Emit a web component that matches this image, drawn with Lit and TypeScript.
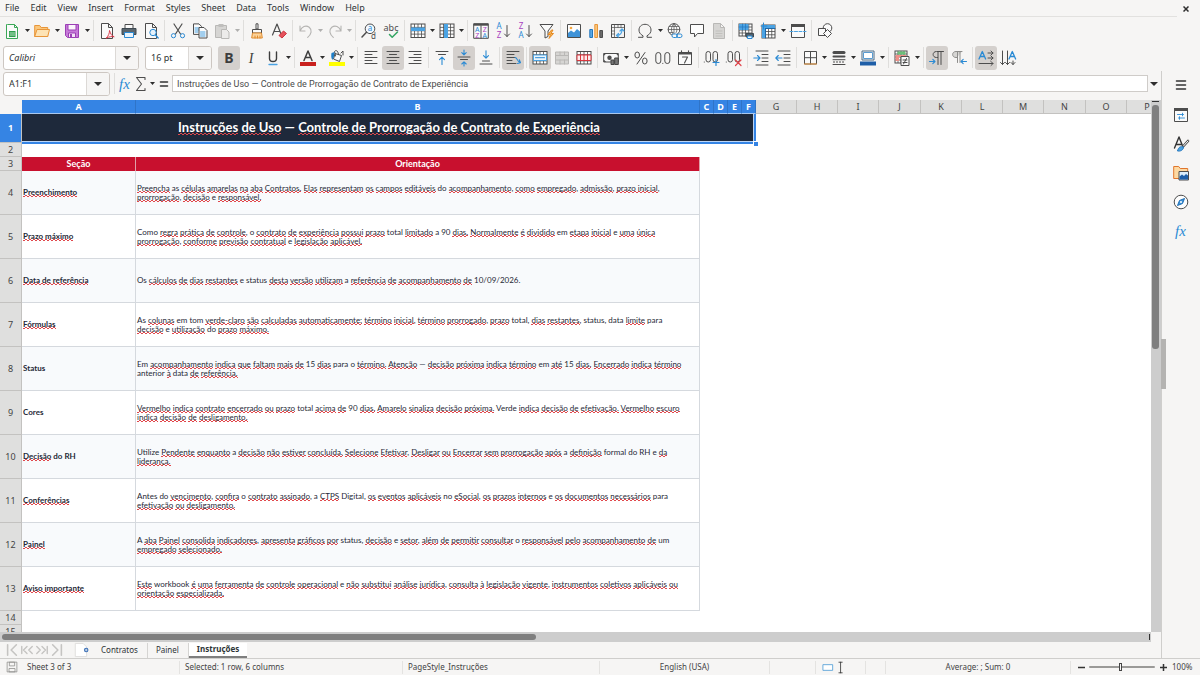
import { LitElement, html, svg, css, nothing, SVGTemplateResult } from "lit";
import { customElement, property } from "lit/decorators.js";

type Art = SVGTemplateResult;

const INK = "#4d4d4d";
const BLUE = "#2a8ad4";
const SKY = "#4ba3e3";
const line = (d: string, color = INK, w = 1): Art =>
  svg`<path d=${d} fill="none" stroke=${color} stroke-width=${w} stroke-linecap="round" stroke-linejoin="round"/>`;
const shape = (d: string, fill: string, stroke = "none"): Art =>
  svg`<path d=${d} fill=${fill} stroke=${stroke} stroke-linejoin="round"/>`;
const page = (stroke = INK, fill = "#fafafa"): Art => shape("M2.5 .5h7l4 4v11h-11zM9.5 .5v4h4", fill, stroke);
const glyph = (x: number, y: number, size: number, color: string, text: string, extra = ""): Art =>
  svg`<text x=${x} y=${y} font-size=${size} fill=${color} text-anchor="middle" style=${extra}>${text}</text>`;
const table = (x: number, y: number, w: number, h: number, c = INK): Art => {
  const a = w / 4;
  const b = h / 4;
  return svg`<rect x=${x} y=${y} width=${w} height=${h} fill="#fdfdfd" stroke=${c}/>
    <path fill="none" stroke=${c} stroke-width=".8" d="M${x + a} ${y}v${h}M${x + 2 * a} ${y}v${h}M${x + 3 * a} ${y}v${h}M${x} ${y + b}h${w}M${x} ${y + 2 * b}h${w}M${x} ${y + 3 * b}h${w}"/>`;
};

const ICONS: Record<string, Art> = {
  new: svg`${shape("M3.500 1.500h7l3 3v11h-11v-14z", "#fafafa", "#3aa757")}${shape("M10.500 1.500v3h3", "none", "#3aa757")}${shape("M5 8h6.500v6h-6.500z", "#2f9e4d")}${line("M6 10h4.500M6 12h4.500", "#d9f2df", 0.8)}`,
  open: svg`${shape("M.7 13.500v-11h5l1.500 2h6.500v9z", "#fbc77b", "#e8963a")}${shape("M.7 13.500l2.300-7h12.500l-1.800 7z", "#fde3b5", "#e8963a")}`,
  save: svg`${shape("M1.500 1.500h13v13h-11l-2-2z", "#c679d8", "#9b3fb5")}${shape("M4 1.500h8v5.500h-8z", "#fbf5fc", "#9b3fb5")}${shape("M4.500 10h7v4.500h-7z", "#f3e3f6", "#9b3fb5")}${shape("M6 11h2v3h-2z", "#9b3fb5")}`,
  pdf: svg`${page()}${line("M7.500 15c2-2.500 3-4.500 3-7.500 1 3.500 2.500 5.500 4.700 6.300-2.500-.5-5-.2-7.700 1.200z", "#d93a4a", 1)}`,
  print: svg`${shape("M4 1.500h8v4h-8z", "#fafafa", INK)}${shape("M1 5.500h14v6h-14z", "#5b666e", "#3f4a52")}${shape("M3.500 9.500h9v5h-9z", "#eaf4fc", BLUE)}`,
  preview: svg`${page()}<circle cx="10" cy="9.500" r="3.200" fill="#e6f2fb" stroke=${BLUE}/>${line("M12.500 12l2.700 3", BLUE, 1.3)}`,
  cut: svg`${line("M4 1l6.500 10M12 1L5.500 11", INK, 1.2)}<circle cx="3.500" cy="12.700" r="2.100" fill="none" stroke=${BLUE}/><circle cx="12.500" cy="12.700" r="2.100" fill="none" stroke=${BLUE}/>`,
  copy: svg`${shape("M1.500 .9h5.500l2.500 2.500v8h-8z", "#fafafa", INK)}${line("M3 5h4M3 7h4M3 9h3", SKY)}${shape("M7 4.500h5l3 3v7.500h-8z", "#fafafa", INK)}${line("M8.500 9h4.500M8.500 11h4.500M8.500 13h4.500", SKY)}`,
  paste: svg`${shape("M1.500 2.500h11v12h-11z", "#d6d5d3", "#b9b8b6")}${shape("M4.500 1h5v3h-5z", "#bfbebc")}${shape("M7.500 6.500h5l2.500 2.500v6.500h-7.500z", "#ecebea", "#b9b8b6")}`,
  brush: svg`${shape("M7 .8h2v5.200h-2z", "#fafafa", INK)}${shape("M3.500 6.500h9v3.500h-9z", "#fafafa", INK)}${shape("M3.500 10h9l.8 5h-10.600z", "#fcd39a", "#e08b2d")}${line("M6 15v-2M8.500 15v-2M11 15v-2", "#e08b2d")}`,
  clear: svg`${line("M1.500 12l4.500-11 4 10M3 8.500h5.500", INK, 1.2)}${shape("M8 12.500l4.500-4.500 3 2.500-4.500 4.500z", "#e5535c", "#cf3340")}`,
  undo: line("M2 3v5h5M2.200 7.800c1.500-4 5.500-6 9-3.500 3.200 2.600 2.300 6.700-1.500 10", "#b5b4b2", 1.1),
  redo: line("M14 3v5h-5M13.800 7.800c-1.500-4-5.500-6-9-3.500-3.200 2.600-2.300 6.700 1.500 10", "#b5b4b2", 1.1),
  find: svg`<circle cx="9" cy="5.800" r="4.800" fill="#f4faff" stroke=${INK}/>${line("M5.500 9.300l-4.500 4.700", INK, 1.5)}${glyph(9, 8.300, 8, BLUE, "a")}${glyph(12.500, 15.500, 8, INK, "d")}`,
  spell: svg`${glyph(8, 8, 9, INK, "abc")}${line("M6.500 11.500l2.700 2.800 5.300-5.300", "#33a563", 1.5)}`,
  rowins: svg`${table(1, 1, 14, 13.500)}${shape("M1 4.500h14v3.500h-14z", SKY)}`,
  colins: svg`${table(1, 1, 14, 13.500)}${shape("M5 1h4v14h-4z", SKY)}`,
  sort: svg`${shape("M.7 .7h14.600v14.600h-14.600z", "#fafafa", INK)}${shape("M.7 .7h14.600v2h-14.600z", INK)}${line("M8 2.700v12.600")}${glyph(4.300, 8.500, 7, BLUE, "A")}${glyph(4.300, 14.800, 7, "#a93fc0", "Z")}${glyph(11.800, 8.500, 7, "#a93fc0", "Z")}${glyph(11.800, 14.800, 7, BLUE, "A")}`,
  az: svg`${glyph(4, 6, 8, BLUE, "A")}${glyph(4, 15, 8, "#a93fc0", "Z")}${line("M12 2.500v11M9.500 11l2.500 2.500 2.500-2.500")}`,
  za: svg`${glyph(4, 6, 8, "#a93fc0", "Z")}${glyph(4, 15, 8, BLUE, "A")}${line("M12 2.500v11M9.500 11l2.500 2.500 2.500-2.500")}`,
  filter: svg`${shape("M1 1.500h13l-5 6.500v5.500l-3 1.500v-7z", "#fafafa", INK)}${shape("M12.500 7l-3.500 4.500h2.500l-1.500 4 4.500-5h-2.500l2-3.500z", "#f7b65c", "#e58a22")}`,
  image: svg`${shape("M1.500 1.500h13v13h-13z", "#fdfdfd", INK)}<circle cx="5" cy="5" r="1.300" fill="#f5a742"/>${shape("M2 14v-4l3-2.500 3 2 3-3.500 3 2.500v5.500z", "#3f93d8")}`,
  chart: svg`${shape("M1.800 6.500h2.700v8h-2.700z", "#5aa9e6", "#2376bd")}${shape("M6.800 1.500h2.700v13h-2.700z", "#fbc77b", "#e8963a")}${shape("M11.800 7.500h2.700v7h-2.700z", "#6b6b6b", INK)}`,
  pivot: svg`${shape("M1.500 1.500h13v13h-13z", "#f2f2f2", INK)}${line("M1.500 4.500h13M4.500 1.500v13M8 1.500v3M11 1.500v3M1.500 8h3M1.500 11h3", INK, 0.7)}${line("M6.500 12.500c3.500 0 5.500-2.500 5.500-6M10 8l2-2 2 2M8.500 10.500l-2 2 2 1.500", SKY, 1.2)}`,
  omega: line("M1.500 14.300h4.500v-1.500c-2.800-1.600-4-3.400-4-5.800 0-3.300 2.500-5.700 6-5.700s6 2.400 6 5.700c0 2.400-1.200 4.200-4 5.800v1.500h4.500", INK, 1),
  link: svg`<circle cx="7" cy="6.500" r="5.800" fill="#fafafa" stroke=${INK}/>${line("M1.200 6.500h11.600M7 .7v11.600M2.300 3.500h9.400M2.300 9.500h4M7 .7c-3.500 3.500-3.500 8 0 11.600M7 .7c3.500 3.500 3.500 7 2 9", INK, 0.7)}<rect x="5" y="11" width="5.500" height="3.500" rx="1.700" fill="#fafafa" stroke=${BLUE}/><rect x="9.500" y="11" width="5.500" height="3.500" rx="1.700" fill="none" stroke=${BLUE}/>`,
  comment: shape("M1.500 1.500h13v9h-6l-3 3.500v-3.500h-4z", "#fdfdfd", INK),
  footer: svg`${page("#b9b8b6", "#d6d5d3")}${line("M5 8h6M5 10.500h6M5 13h6", "#bcbbb9", 0.8)}`,
  printarea: svg`${table(1, 1, 13, 12)}${shape("M1 1h9.500v6h-9.500z", SKY)}${line("M4.500 1v6M7.500 1v6M1 4h9.500", "#2376bd", 0.7)}${shape("M8 10.500h7.500v3.500h-7.500z", "#53606a", "#3f4a52")}${shape("M9.500 13h4.500v2.500h-4.500z", "#eaf4fc", BLUE)}`,
  freeze: svg`${table(2, 2, 13, 13)}${shape("M2 2h13v3.500h-13zM2 2h3.500v13h-3.500z", SKY)}${line("M5.500 5.500v9.500M5.500 5.500h9.500", "#1f67a6", 1)}${line("M3.500 0v6M1 3h6", BLUE, 1)}`,
  split: svg`${shape("M1.500 1.500h13v13h-13z", "#fafafa", INK)}${shape("M1 1h14v3h-14z", INK)}${line("M0 8.500h3M4.500 8.500h3M9 8.500h3M13.500 8.500h2.500", SKY)}`,
  shapes: svg`<circle cx="10.500" cy="5" r="4.300" fill="#fafafa" stroke=${INK}/>${shape("M1.500 5.500h7v7h-7z", "#fafafa", INK)}${shape("M10.500 6.500l4 4-4 4-4-4z", "#fafafa", INK)}`,
  bold: glyph(8, 13, 14, "#3d3d3d", "B", "font-weight:700"),
  italic: svg`<text x="8" y="13" font-size="14" fill="#3d3d3d" text-anchor="middle" font-family="Liberation Serif" font-style="italic">I</text>`,
  underline: svg`${line("M4.500 2v6.500c0 4 7 4 7 0v-6.500", "#3d3d3d", 1.4)}${line("M4 14.500h8", SKY, 1.3)}`,
  fontcolor: svg`${line("M4 10.500l4-9.500 4 9.500M5.500 7.500h5", "#3d3d3d", 1.5)}${shape("M0 12h16v4h-16z", "#c9211e")}`,
  fill: svg`${shape("M6 3.500l6.500 2-2 6-6-2.500z", "#fafafa", INK)}${line("M6.500 6l-1-4.500c1-1.500 3-1 3.500 1l.5 2", INK)}${shape("M2.500 3l3-1-.5 4.500-1.500 3.500c-1.500-2-1.500-4.500-1-7z", "#1f7fc8")}${line("M12 3l2-2v4", INK)}${shape("M0 12h16v4h-16z", "#ffff00")}`,
  left: line("M2 1.500h12M2 4.500h7M2 7.500h12M2 10.500h7M2 13.500h12"),
  center: line("M2 1.500h12M4.500 4.500h7M2 7.500h12M4.500 10.500h7M2 13.500h12"),
  right: line("M2 1.500h12M7 4.500h7M2 7.500h12M7 10.500h7M2 13.500h12"),
  top: svg`${line("M2 1.500h12M4.500 4.500h7")}${line("M8 14.500v-7M5.500 9.700l2.500-2.500 2.500 2.500", BLUE, 1.1)}`,
  middle: svg`${line("M2 7h12M4.500 9.500h7")}${line("M8 0v4.500M5.800 2.700l2.200 2.200 2.200-2.200M8 16v-4M5.800 14l2.200-2.200 2.200 2.200", BLUE, 1.1)}`,
  bottom: svg`${line("M4.500 11h7M2 14h12")}${line("M8 .8v7M5.500 5.600l2.500 2.500 2.500-2.500", BLUE, 1.1)}`,
  wrap: svg`${line("M2 1.500h12M2 4.500h7M2 7.500h8M2 10.500h5M2 13.500h9")}${line("M10 7.500c2.500 0 2 4 5 5M12.500 13.500l3-.8-1.200-3", BLUE, 1.1)}`,
  merge: svg`${table(1, 1.500, 14, 12.500)}${shape("M1.500 5h13v5.500h-13z", "#eaf5fd", SKY)}${line("M3.500 7.700h9", BLUE)}`,
  mergegrey: svg`${shape("M1.500 2h13v12h-13z", "#d6d5d3", "#b9b8b6")}${line("M1.500 5.500h13M1.500 10h13M6 2v3.500M10.500 2v3.500M6 10v4M10.500 10v4", "#b9b8b6")}`,
  mergered: svg`${table(1, 1.500, 14, 12.500)}${shape("M1 5h14v5.500h-14z", "#fdecec", "#d9363e")}${line("M4.500 5v5.500M8 5v5.500M11.500 5v5.500", "#d9363e")}`,
  currency: svg`${shape("M.7 3.500h14.600v8.500h-14.600z", "#fafafa", INK)}<circle cx="6.500" cy="7.800" r="2.200" fill=${INK}/>${shape("M.7 3.500h2.500l-2.500 2.500zM15.300 3.500h-2.500l2.500 2.500zM.7 12h2.500l-2.500-2.500z", INK)}${shape("M8 10h3v4.500h-3zM11.700 8h3.600v6.500h-3.600z", "#777", "#444")}`,
  percent: svg`<ellipse cx="4.200" cy="5" rx="2.300" ry="3" fill="none" stroke=${INK}/><ellipse cx="11.800" cy="11" rx="2.300" ry="3" fill="none" stroke=${INK}/>${line("M12 2.500l-8 11.500")}`,
  number: svg`<rect x=".8" y="2.500" width="5" height="11" rx="2.500" fill="none" stroke=${INK}/><rect x="9.800" y="2.500" width="5" height="11" rx="2.500" fill="none" stroke=${INK}/>${line("M7.800 13.300v.2")}`,
  date: svg`${shape("M1.500 2.500h13v12h-13z", "#fafafa", INK)}${shape("M1.500 2.500h13v2h-13z", INK)}${line("M4.500 .8v2M11.500 .8v2M5.500 7h5l-3 6", INK, 1.1)}`,
  decadd: svg`<rect x="2" y="1.500" width="4.500" height="10.500" rx="2.200" fill="none" stroke=${INK}/><rect x="9" y="1.500" width="4.500" height="10.500" rx="2.200" fill="none" stroke=${INK}/>${line("M.3 12v.1")}${line("M12 9.500v6M9 12.500h6", BLUE, 1.2)}`,
  decdel: svg`<rect x="2" y="1.500" width="4.500" height="10.500" rx="2.200" fill="none" stroke=${INK}/><rect x="9" y="1.500" width="4.500" height="10.500" rx="2.200" fill="none" stroke=${INK}/>${line("M.3 12v.1")}${line("M9.500 10l5.500 5.500M15 10l-5.500 5.500", "#e0444b", 1.2)}`,
  indent: svg`${line("M3 1h12M9 4.500h6M9 8h6M9 11.500h6M3 15h12")}${line("M.8 8h6M4.500 5.500l2.500 2.500-2.500 2.500", BLUE, 1.1)}`,
  outdent: svg`${line("M3 1h12M9 4.500h6M9 8h6M9 11.500h6M3 15h12")}${line("M1 8h6M3.300 5.500l-2.500 2.500 2.500 2.500", BLUE, 1.1)}`,
  borders: svg`${shape("M2.500 1.500h12v12.500h-12z", "#fafafa", INK)}${line("M8.500 1.500v12.500M2.500 7.700h12")}${line("M2.500 14h12", "#e8963a")}`,
  linestyle: svg`${line("M3 2.500h10", INK, 3)}${line("M2.500 6.500h11", INK, 2)}${line("M2 9.700h12M2 14.500h12", INK, 1)}<path d="M2 12h12" stroke=${INK} stroke-dasharray="2 1"/>`,
  bordercolor: svg`${shape("M2 1h12v9h-12z", "#fafafa", "#4b6b86")}${shape("M3.500 2.500h9v6h-9z", "#fff", "#5a9bd0")}${shape("M0 11.500h16v4h-16z", "#1f5fa8")}`,
  conditional: svg`${table(1, 1, 12, 12)}${shape("M3.500 1.500h8v3h-8z", "#6cc07a")}${shape("M1.500 5h3.500v6h-3.500zM5 5h7v2h-7z", "#ef8f88")}${shape("M7 6.500h8v9h-8z", "#fafafa", INK)}${line("M9 10h4M9 12.500h4M12.500 8.500l-3 5.500")}`,
  ltr: svg`${line("M14.500 1.500h-7c-4.500 0-4.500 6 0 6h1M9 1.500v13M12 1.500v13")}${line("M.5 11.500h5.500M3.800 9.300l2.200 2.200-2.200 2.200", BLUE, 1.1)}`,
  rtl: svg`${shape("M11 1.500h-6c-4.500 0-4.500 6 0 6h1z", "#d6d5d3")}${line("M11 1.500h-6c-4.500 0-4.500 6 0 6h1M6.500 1.500v11M9 1.500v11", "#8e8d8b")}${line("M10 11.500h5.500M12.200 9.300l-2.200 2.200 2.200 2.200", BLUE, 1.1)}`,
  texth: svg`${line("M1 9l3.300-7.500 3.300 7.500M2.200 6.500h4.200", BLUE, 1.3)}${line("M10 3h5M13 1l2 2-2 2M10 8h5M13 6l2 2-2 2M1 13.500h14M13 11.500l2 2-2 2")}`,
  textv: svg`${line("M9 9l3.300-7.500 3.300 7.500M10.200 6.500h4.200", BLUE, 1.3)}${line("M2.500 1v13.500M.5 12.500l2 2 2-2M7.500 1v13.500M5.500 12.500l2 2 2-2M13 11v3.500M11 12.500l2 2 2-2")}`,
  fx: svg`<text x="7.500" y="13" font-size="15" fill=${BLUE} text-anchor="middle" font-family="Liberation Serif" font-style="italic">fx</text>`,
  sum: line("M12 3.500v-2h-8.500l5 6.500-5 6.500h8.500v-2", INK, 1.1),
  equals: line("M4.500 6h7M4.500 10h7", "#333", 1.6),
  menu: line("M3.500 4h9M3.500 8h9M3.500 12h9", "#333", 1.6),
  properties: svg`${shape("M1.500 1.500h13v13h-13z", "#fafafa", INK)}${shape("M1 1h14v3h-14z", INK)}${line("M4.500 7.500h6M9.500 6.200v2.600M5.500 11h6M6.500 9.700v2.600", BLUE, 0.9)}`,
  styles: svg`${line("M1.500 12l4.500-11 4 10M3 8.500h5.500", "#333", 1.4)}${line("M15 5l-4.500 5", INK, 2.6)}${line("M15 5l-4.500 5", "#fafafa", 1)}${shape("M4.500 15c1-4 3-5 6-4 0 3-3 4.500-6 4z", "#4ba3e3", "#2376bd")}`,
  gallery: svg`${shape("M.7 13.500v-12h5l1.500 2h7.500v10z", "#fdd9a2", "#e0762d")}${shape("M6 6.500h9.500v8.500h-9.500z", "#dceefb", INK)}${shape("M6.500 14.500v-3l2.500-2 2 1.500 2-2 2 1.500v4z", "#1f5fa8")}`,
  navigator: svg`<circle cx="8" cy="8" r="6.800" fill="#fdfdfd" stroke=${INK}/>${shape("M11.500 4.500l-2 5-5 2 2-5z", "#3f93d8", "#1f6fb5")}<circle cx="8" cy="8" r="1" fill="#fff"/>`,
  disk: svg`${shape("M1.500 1.500h13v13h-13z", "none", "#8c8b89")}${shape("M4.500 1.500h7v5h-7zM4 10h8v4.500h-8z", "none", "#8c8b89")}`,
  addsheet: svg`${shape("M-2 .5h9l4 4v11h-13z", "#fff", "#dddcda")}<circle cx="10.500" cy="8" r="2.600" fill="#3b6fb5"/>${line("M10.500 7v2M9.500 8h2", "#fff", 0.8)}`,
  selmode: svg`${shape("M.5 4.500h12v7h-12z", "#fff", "#4b9ad4")}`,
  ibeam: line("M3 1.500h4M5 1.500v13M3 14.500h4", "#333", 1),
  first: line("M3 2v12M13 2l-6 6 6 6", "#c5c4c2", 1.8),
  prev: line("M2 4v8M8 4l-4 4 4 4M14 4l-4 4 4 4", "#c5c4c2", 1.6),
  next: line("M14 4v8M8 4l4 4-4 4M2 4l4 4-4 4", "#c5c4c2", 1.6),
  last: line("M13 2v12M3 2l6 6-6 6", "#c5c4c2", 1.8),
};

@customElement("tool-icon")
export class ToolIcon extends LitElement {
  @property() name = "";
  static styles = css`
    :host { display: block; width: 16px; height: 16px; }
    .art { display: block; width: 100%; height: 100%; overflow: visible; font-family: "Noto Sans", sans-serif; }
  `;
  render() {
    return html`<svg class="art" viewBox="0 0 16 16" aria-hidden="true">${ICONS[this.name] ?? nothing}</svg>`;
  }
}

/* Flags after a tool name: "*" pressed, "+" drop-down, "-" compact drop-down. "|" separates groups. */
const STANDARD =
  "new+ open+ save+ | pdf print preview | cut copy paste+ | brush clear | undo- redo- | find spell | rowins- colins- | sort az za filter | image chart pivot | omega+ link comment footer | printarea freeze+ split | shapes";
const FORMATTING =
  "bold* italic underline+ | fontcolor- fill- | left center* right | top middle* bottom | wrap* | merge* mergegrey mergered | currency+ percent number date | decadd decdel | indent outdent | borders- linestyle- bordercolor- | conditional+ | ltr* rtl | texth* textv";

const MENUS = ["File", "Edit", "View", "Insert", "Format", "Styles", "Sheet", "Data", "Tools", "Window", "Help"];

const TITLE = "[Instruções] [de Uso] — [Controle de Prorrogação de Contrato de Experiência]";

/* Square brackets delimit words flagged by the spelling checker. */
const ROWS: [string, string[]][] = [
  ["[Preenchimento]", [
    "[Preencha] as [células] [amarelas] [na] [aba] [Contratos.] [Elas] [representam] [os] [campos] [editáveis] do [acompanhamento], [como] [empregado], [admissão], [prazo inicial],",
    "[prorrogação], [decisão] e [responsável.]"]],
  ["[Prazo máximo]", [
    "Como [regra] [prática] [de] [controle], o [contrato] [de] [experiência] [possui] [prazo] total [limitado] a 90 [dias.] [Normalmente] [é] [dividido] em [etapa] [inicial] e [uma] [única]",
    "[prorrogação], [conforme] [previsão] [contratual] e [legislação] [aplicável.]"]],
  ["[Data de referência]", [
    "Os [cálculos] [de] [dias] [restantes] e status [desta] [versão] [utilizam] a [referência] [de] [acompanhamento] [de] 10/09/2026."]],
  ["[Fórmulas]", [
    "As [colunas] em tom [verde-claro] [são] [calculadas] [automaticamente:] [término] [inicial], [término] [prorrogado], [prazo] total, [dias] [restantes], status, data [limite] para",
    "[decisão] e [utilização] do [prazo] [máximo.]"]],
  ["Status", [
    "Em [acompanhamento] [indica] [que] [faltam] [mais] [de] 15 [dias] para o [término.] [Atenção] — [decisão] [próxima] [indica] [término] em [até] 15 [dias.] [Encerrado] [indica] [término]",
    "anterior [à] data [de] [referência.]"]],
  ["Cores", [
    "[Vermelho] [indica] [contrato] [encerrado] [ou] [prazo] total [acima] [de] 90 [dias.] [Amarelo] [sinaliza] [decisão] [próxima.] Verde [indica] [decisão] [de] [efetivação.] [Vermelho] [escuro]",
    "[indica] [decisão] [de] [desligamento.]"]],
  ["[Decisão] do RH", [
    "Utilize [Pendente] [enquanto] a [decisão] [não] [estiver] [concluída.] [Selecione] [Efetivar], [Desligar] [ou] [Encerrar] [sem] [prorrogação] [após] a [definição] formal do RH e [da]",
    "[liderança.]"]],
  ["[Conferências]", [
    "Antes do [vencimento], [confira] o [contrato] [assinado], a [CTPS] Digital, [os] [eventos] [aplicáveis] no [eSocial], [os] [prazos] [internos] e [os] [documentos] [necessários] para",
    "[efetivação] [ou] [desligamento.]"]],
  ["[Painel]", [
    "A [aba] [Painel] [consolida] [indicadores], [apresenta] [gráficos] [por] status, [decisão] e [setor], [além] [de] [permitir] [consultar] o [responsável] [pelo] [acompanhamento] [de] um",
    "[empregado] [selecionado.]"]],
  ["[Aviso importante]", [
    "[Este] workbook [é] [uma] [ferramenta] [de] [controle] [operacional] e [não] [substitui] [análise] [jurídica], [consulta] [à] [legislação] [vigente], [instrumentos] [coletivos] [aplicáveis] [ou]",
    "[orientação] [especializada.]"]],
];

@customElement("app-root")
export class AppRoot extends LitElement {
  static styles = css`
    :host {
      display: flex; flex-direction: column; height: 100vh; overflow: hidden;
      background: #f6f5f4; color: #2e3436;
      font: 9px/12px "Noto Sans", sans-serif;
    }
    * { box-sizing: border-box; }
    button, input { font: inherit; color: inherit; margin: 0; padding: 0; border: 0; background: none; outline: none; }
    button { display: flex; align-items: center; justify-content: center; flex: none; }
    .menubar { display: flex; align-items: center; height: 17px; padding-right: 6px; }
    .menus { display: flex; flex: 1; gap: 11px; padding-left: 5px; height: 17px; align-items: center; border-bottom: 1px solid #e2e1df; }
    .close { width: 17px; height: 17px; }
    .close-art { width: 6px; height: 6px; }
    .toolbar { display: flex; align-items: center; height: 27px; padding-left: 1px; }
    .formatting { padding-left: 3px; }
    .tool { width: 22px; height: 24px; border-radius: 3px; }
    .pressed { background: #d4d0cd; }
    .drop { width: 8px; height: 24px; }
    .compact { width: 7px; }
    .drop-art { width: 5px; height: 3px; display: block; flex: none; }
    .big { width: 8px; height: 4px; }
    .dim { opacity: .35; }
    .sep { width: 1px; height: 21px; margin: 0 2px; background: #dfdedc; flex: none; }
    .combo { display: flex; height: 24px; border: 1px solid #cdc7c2; border-radius: 3px; background: #fff; overflow: hidden; flex: none; }
    .combo-text { flex: 1; min-width: 0; padding-left: 5px; }
    .combo-drop { width: 23px; background: #f6f5f4; border-left: 1px solid #dcd9d6; }
    .font { width: 136px; margin-right: 6px; }
    .font .combo-text { font-style: italic; }
    .size { width: 67px; margin-right: 6px; }
    .name { width: 107px; margin-right: 2px; }
    .body { display: flex; flex: 1; min-height: 0; }
    .work { display: flex; flex-direction: column; flex: 1; min-width: 0; }
    .formula { display: flex; align-items: center; height: 29px; padding: 0 1px 4px 3px; }
    .formula .tool { width: 16px; }
    .formula-text { flex: 1; min-width: 0; height: 17px; padding-left: 4px; background: #fff; border: 1px solid #cfccc9; color: #4a4a4a; font-family: "Roboto", sans-serif; }
    .formula-drop { width: 12px; height: 24px; }
    .sidebar { position: relative; display: flex; flex-direction: column; align-items: center; gap: 5px; width: 39px; border-left: 1px solid #cfcecc; }
    .sidebar .tool { height: 24px; }
    .sidebar .tool:first-of-type { height: 27px; }
    .grip { position: absolute; left: -1px; top: 268px; width: 5px; height: 50px; background: #b4b3b1; }
    .view { display: flex; flex: 1; min-height: 0; }
    .sheet { flex: 1; min-width: 0; overflow: hidden; background: #fff; }
    .grid { table-layout: fixed; border-collapse: separate; border-spacing: 0; width: 1168px; }
    .grid th, .grid td { padding: 0; overflow: hidden; }
    .c-row { width: 22px; }
    .c-a { width: 114px; }
    .c-b { width: 564px; }
    .c-s { width: 14px; }
    .c-n { width: 41px; }
    .c-w { width: 42px; }
    .cols { height: 14px; }
    .corner { background: #f6f5f4; }
    .col { height: 14px; line-height: 13px; font-weight: 400; background: #dfdfde; border-right: 1px solid #c3c2c0; border-bottom: 1px solid #c3c2c0; color: #444; }
    .col-sel { background: #3584e4; color: #fff; font-weight: 700; border-right-color: #2f74c8; border-bottom-color: #a9c8ee; }
    .num { font-weight: 400; background: #dfdfde; border-right: 1px solid #c3c2c0; border-bottom: 1px solid #c3c2c0; color: #444; }
    .num-sel { background: #3584e4; color: #fff; font-weight: 700; }
    .r-title { height: 29px; }
    .r-thin { height: 14px; }
    .r-text { height: 44px; }
    .grid .title { position: relative; overflow: visible; padding-bottom: 3px; background: #1e293b; color: #fff; font: 700 13px/16px "Lato", sans-serif; text-align: center; }
    .title::after { content: ""; position: absolute; inset: 0 0 -1px 0; border: solid #3584e4; border-width: 0 2px 2px 0; box-shadow: inset -1px -1px #bcd5f5; }
    .handle { position: absolute; z-index: 1; right: -2px; bottom: -3px; width: 5px; height: 5px; background: #3584e4; border: solid #fff; border-width: 1px 0 0 1px; }
    .head { background: #c8102e; color: #fff; font: 700 9px/12px "Lato", sans-serif; border-right: 1px solid #e0a0a8; text-align: center; }
    .label, .text { border-right: 1px solid #d5d9de; border-bottom: 1px solid #d5d9de; font: 8px/9px "Lato", sans-serif; color: #1f2937; text-align: left; vertical-align: middle; white-space: nowrap; }
    .grid .label { font-weight: 700; padding-left: 1px; }
    .grid .text { padding-left: 1px; }
    .shade { background: #f8fafc; }
    .miss {
      background:
        linear-gradient(90deg, #e0484c 50%, #e0484c00 0) 0 100% / 4px 1px repeat-x,
        linear-gradient(90deg, #e0484c 50%, #e0484c00 0) 2px calc(100% - 1px) / 4px 1px repeat-x;
    }
    .vscroll { display: flex; flex-direction: column; gap: 3px; width: 10px; padding: 1px 2px 0 1px; background: #cdcdcd; }
    .vscroll::before { content: ""; flex: none; height: 1px; background: #333; }
    .vthumb { height: 46%; background: #7f7f7f; border-radius: 3px; }
    .hscroll { display: flex; justify-content: space-between; height: 10px; margin-right: 10px; padding: 2px 1px 2px 2px; background: #cdcdcd; }
    .hscroll::after { content: ""; width: 1px; background: #333; }
    .hthumb { width: 46.5%; height: 6px; background: #7f7f7f; border-radius: 3px; }
    .tabs { display: flex; align-items: center; height: 16px; padding-left: 4px; font-size: 8px; }
    .nav { width: 15px; height: 15px; }
    .add { width: 19px; margin-left: 10px; }
    .nav tool-icon { width: 14px; height: 14px; }
    .tab { height: 15px; padding: 0 9px 0 8px; border-right: 1px solid #d5d4d2; }
    .tab-on { background: #fff; font-weight: 700; padding: 0 8px; border-right: 0; border-bottom: 2px solid #7f7f7f; }
    .status { display: grid; grid-template-columns: 22px 158fr 223fr 197fr 170fr 46fr 30fr 20fr 20fr 185fr 96px 33px; align-items: center; height: 17px; border-top: 1px solid #cfcecc; color: #444; font-size: 8px; }
    .cell { min-width: 0; height: 13px; padding-left: 5px; border-right: 1px solid #e4e3e1; white-space: nowrap; overflow: hidden; }
    .cell:last-child { border-right: 0; }
    .mid { text-align: center; padding-left: 0; }
    .disk { width: 12px; height: 12px; margin-left: 6px; }
    .modes { display: flex; min-width: 0; padding-left: 6px; height: 13px; align-items: center; }
    .modes tool-icon { height: 13px; flex: none; width: 14px; }
    .zoom { display: flex; align-items: center; gap: 4px; height: 13px; padding-left: 6px; }
    .step { width: 8px; height: 12px; }
    .step-art { width: 7px; height: 7px; flex: none; }
    .slider { appearance: none; flex: 1; min-width: 0; height: 12px; }
    .slider::-webkit-slider-runnable-track { height: 2px; background: #9b9a98; border-radius: 1px; }
    .slider::-webkit-slider-thumb { appearance: none; width: 3px; height: 8px; margin-top: -3px; background: #f6f5f4; border: 1px solid #444; }
  `;

  private arrow(big = false, dim = false) {
    return html`<svg class="drop-art ${big ? "big" : ""} ${dim ? "dim" : ""}" viewBox="0 0 10 5" preserveAspectRatio="none" aria-hidden="true"><path d="M0 0h10l-5 5z" fill="#2e2e2e"/></svg>`;
  }

  private tools(spec: string) {
    return spec.split(" ").map((token) => {
      if (token === "|") return html`<span class="sep"></span>`;
      const name = token.replace(/[*+-]$/, "");
      const flag = token.slice(name.length);
      const dim = ["undo", "redo", "paste"].includes(name);
      return html`<button class="tool ${flag === "*" ? "pressed" : ""}" aria-label=${name}><tool-icon name=${name}></tool-icon></button>${
        flag === "+" || flag === "-"
          ? html`<button class="drop ${flag === "-" ? "compact" : ""}" aria-label="${name} options">${this.arrow(false, dim)}</button>`
          : nothing}`;
    });
  }

  private combo(kind: string, label: string, value: string) {
    return html`<div class="combo ${kind}"><input class="combo-text" aria-label=${label} .value=${value}><button class="combo-drop" aria-label="${label} list">${this.arrow(true)}</button></div>`;
  }

  private spelled(text: string) {
    return text.split(/(\[[^\]]*\])/).map((part) => (part.startsWith("[") ? html`<span class="miss">${part.slice(1, -1)}</span>` : part));
  }

  private sheet() {
    const wide = new Set(["J", "N"]);
    const rest = [..."GHIJKLMNOP"];
    return html`<table class="grid">
      <colgroup><col class="c-row"><col class="c-a"><col class="c-b">${[..."CDEF"].map(() => html`<col class="c-s">`)}${rest.map((c) => html`<col class=${wide.has(c) ? "c-w" : "c-n"}>`)}</colgroup>
      <thead><tr class="cols"><td class="corner"></td>${[..."ABCDEF"].map((c) => html`<th class="col col-sel" scope="col">${c}</th>`)}${rest.map((c) => html`<th class="col" scope="col">${c}</th>`)}</tr></thead>
      <tbody>
        <tr class="r-title"><th class="num num-sel" scope="row">1</th><td class="title" colspan="6">${this.spelled(TITLE)}<span class="handle"></span></td></tr>
        <tr class="r-thin"><th class="num" scope="row">2</th></tr>
        <tr class="r-thin"><th class="num" scope="row">3</th><td class="head">Seção</td><td class="head">Orientação</td></tr>
        ${ROWS.map(([label, lines], i) => html`<tr class="r-text"><th class="num" scope="row">${i + 4}</th>
          <td class="label ${i % 2 ? "" : "shade"}">${this.spelled(label)}</td>
          <td class="text ${i % 2 ? "" : "shade"}">${lines.map((l) => html`<div>${this.spelled(l)}</div>`)}</td></tr>`)}
        <tr class="r-thin"><th class="num" scope="row">14</th></tr>
        <tr class="r-thin"><th class="num" scope="row">15</th></tr>
      </tbody></table>`;
  }

  render() {
    return html`
      <header class="menubar">
        <nav class="menus">${MENUS.map((m) => html`<button>${m}</button>`)}</nav>
        <button class="close" aria-label="Close"><svg class="close-art" viewBox="0 0 6 6"><path d="M.5 .5l5 5M5.500 .5l-5 5" stroke="#2e2e2e" stroke-width="1.500"/></svg></button>
      </header>
      <div class="toolbar">${this.tools(STANDARD)}</div>
      <div class="toolbar formatting">${this.combo("font", "Font name", "Calibri")}${this.combo("size", "Font size", "16 pt")}${this.tools(FORMATTING)}</div>
      <div class="body">
        <main class="work">
          <div class="formula">
            ${this.combo("name", "Name box", "A1:F1")}<span class="sep"></span>
            <button class="tool" aria-label="Function wizard"><tool-icon name="fx"></tool-icon></button>
            <button class="tool" aria-label="Sum"><tool-icon name="sum"></tool-icon></button>
            <button class="drop compact" aria-label="Function list">${this.arrow()}</button>
            <button class="tool" aria-label="Formula"><tool-icon name="equals"></tool-icon></button>
            <input class="formula-text" aria-label="Input line" .value=${"Instruções de Uso — Controle de Prorrogação de Contrato de Experiência"}>
            <button class="formula-drop" aria-label="Expand formula bar">${this.arrow(true)}</button>
          </div>
          <div class="view"><div class="sheet">${this.sheet()}</div><div class="vscroll"><div class="vthumb"></div></div></div>
          <div class="hscroll"><div class="hthumb"></div></div>
          <div class="tabs">
            ${["first", "prev", "next", "last"].map((n) => html`<button class="nav" aria-label="${n} sheet"><tool-icon name=${n}></tool-icon></button>`)}
            <button class="nav add" aria-label="Add sheet"><tool-icon name="addsheet"></tool-icon></button>
            <button class="tab">Contratos</button><button class="tab">Painel</button><button class="tab tab-on">Instruções</button>
          </div>
        </main>
        <aside class="sidebar">
          <span class="grip"></span>
          ${["menu", "properties", "styles", "gallery", "navigator", "fx"].map((n) => html`<button class="tool" aria-label=${n}><tool-icon name=${n}></tool-icon></button>`)}
        </aside>
      </div>
      <footer class="status">
        <tool-icon class="disk" name="disk"></tool-icon>
        <span class="cell">Sheet 3 of 3</span><span class="cell">Selected: 1 row, 6 columns</span><span class="cell">PageStyle_Instruções</span>
        <span class="cell mid">English (USA)</span><span class="cell"></span>
        <span class="modes"><tool-icon name="selmode"></tool-icon><tool-icon name="ibeam"></tool-icon></span>
        <span class="cell"></span><span class="cell"></span>
        <span class="cell mid">Average: ; Sum: 0</span>
        <span class="zoom">
          <button class="step" aria-label="Zoom out"><svg class="step-art" viewBox="0 0 7 7"><path d="M0 3.500h7" stroke="#333" stroke-width="1.500"/></svg></button>
          <input class="slider" type="range" aria-label="Zoom" min="0" max="100" value="48">
          <button class="step" aria-label="Zoom in"><svg class="step-art" viewBox="0 0 7 7"><path d="M0 3.500h7M3.500 0v7" stroke="#333" stroke-width="1.500"/></svg></button>
        </span>
        <span class="cell">100%</span>
      </footer>`;
  }
}
